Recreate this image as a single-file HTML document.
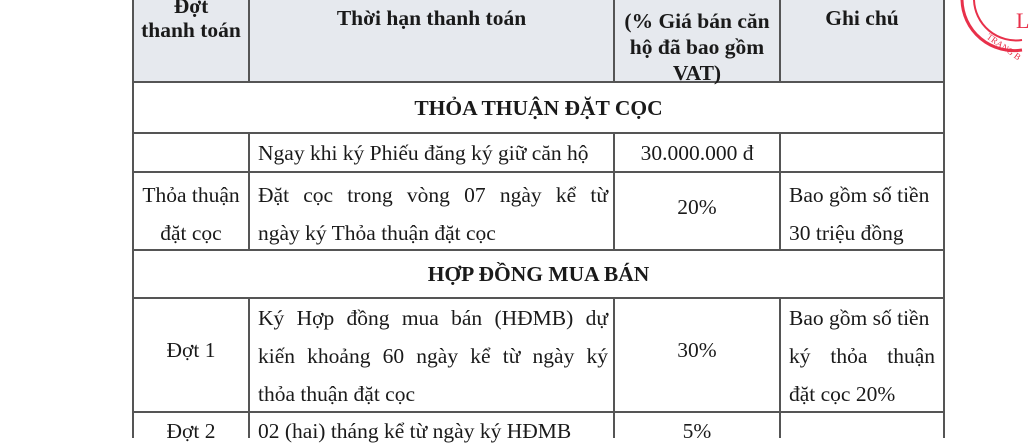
<html><head><style>
body{margin:0;width:1030px;height:438px;background:#fff;position:relative;overflow:hidden;font-family:"Liberation Serif",serif;color:#1a1a1a;font-size:21.5px}
.t{position:absolute;white-space:nowrap;line-height:24px}
.c{text-align:center}
.b{font-weight:bold}
.l{position:absolute;background:#555}
.j{text-align:justify;text-align-last:justify;white-space:normal}
</style></head><body>
<div style="position:absolute;left:133px;top:0;width:811px;height:82px;background:#e6e9ee"></div>
<div class="l" style="left:132px;top:81px;width:813px;height:2px"></div>
<div class="l" style="left:132px;top:132px;width:813px;height:2px"></div>
<div class="l" style="left:132px;top:171px;width:813px;height:2px"></div>
<div class="l" style="left:132px;top:249px;width:813px;height:2px"></div>
<div class="l" style="left:132px;top:297px;width:813px;height:2px"></div>
<div class="l" style="left:132px;top:411px;width:813px;height:2px"></div>
<div class="l" style="left:132px;top:0;width:2px;height:438px"></div>
<div class="l" style="left:943px;top:0;width:2px;height:438px"></div>
<div class="l" style="left:248px;top:0;width:2px;height:82px"></div>
<div class="l" style="left:613px;top:0;width:2px;height:82px"></div>
<div class="l" style="left:779px;top:0;width:2px;height:82px"></div>
<div class="l" style="left:248px;top:133px;width:2px;height:117px"></div>
<div class="l" style="left:613px;top:133px;width:2px;height:117px"></div>
<div class="l" style="left:779px;top:133px;width:2px;height:117px"></div>
<div class="l" style="left:248px;top:298px;width:2px;height:140px"></div>
<div class="l" style="left:613px;top:298px;width:2px;height:140px"></div>
<div class="l" style="left:779px;top:298px;width:2px;height:140px"></div>
<div class="t c b" style="left:134px;width:114px;top:-6px">Đợt<br>thanh toán</div>
<div class="t c b" style="left:250px;width:363px;top:6px">Thời hạn thanh toán</div>
<div class="t c b" style="left:615px;width:164px;top:8px;line-height:26px">(% Giá bán căn<br>hộ đã bao gồm<br>VAT)</div>
<div class="t c b" style="left:781px;width:162px;top:6px">Ghi chú</div>
<div class="t c b" style="left:134px;width:809px;top:96px">THỎA THUẬN ĐẶT CỌC</div>
<div class="t" style="left:258px;top:141px">Ngay khi ký Phiếu đăng ký giữ căn hộ</div>
<div class="t c" style="left:615px;width:164px;top:141px">30.000.000 đ</div>
<div class="t c" style="left:134px;width:114px;top:176px;line-height:38px">Thỏa thuận<br>đặt cọc</div>
<div class="t j" style="left:258px;width:350px;top:176px;line-height:38px">Đặt cọc trong vòng 07 ngày kể từ</div>
<div class="t" style="left:258px;top:214px;line-height:38px">ngày ký Thỏa thuận đặt cọc</div>
<div class="t c" style="left:615px;width:164px;top:195px">20%</div>
<div class="t" style="left:789px;top:176px;line-height:38px">Bao gồm số tiền<br>30 triệu đồng</div>
<div class="t c b" style="left:134px;width:809px;top:262px">HỢP ĐỒNG MUA BÁN</div>
<div class="t c" style="left:134px;width:114px;top:338px">Đợt 1</div>
<div class="t j" style="left:258px;width:350px;top:299px;line-height:38px">Ký Hợp đồng mua bán (HĐMB) dự</div>
<div class="t j" style="left:258px;width:350px;top:337px;line-height:38px">kiến khoảng 60 ngày kể từ ngày ký</div>
<div class="t" style="left:258px;top:375px;line-height:38px">thỏa thuận đặt cọc</div>
<div class="t c" style="left:615px;width:164px;top:338px">30%</div>
<div class="t" style="left:789px;top:299px;line-height:38px">Bao gồm số tiền</div>
<div class="t j" style="left:789px;width:146px;top:337px;line-height:38px">ký thỏa thuận</div>
<div class="t" style="left:789px;top:375px;line-height:38px">đặt cọc 20%</div>
<div class="t c" style="left:134px;width:114px;top:419px">Đợt 2</div>
<div class="t" style="left:258px;top:419px">02 (hai) tháng kể từ ngày ký HĐMB</div>
<div class="t c" style="left:615px;width:164px;top:419px">5%</div>
<svg style="position:absolute;left:950px;top:0" width="80" height="60">
<path d="M12 0 A52 52 0 0 0 72 50" fill="none" stroke="#e8304a" stroke-width="3"/>
<path d="M24 0 A42 42 0 0 0 72 40" fill="none" stroke="#e8304a" stroke-width="2"/>
<text x="36" y="38" font-size="9" fill="#e8304a" transform="rotate(35 36 38)">TRANG B</text>
<text x="66" y="28" font-size="22" fill="#e8304a">L</text>
</svg>
</body></html>
